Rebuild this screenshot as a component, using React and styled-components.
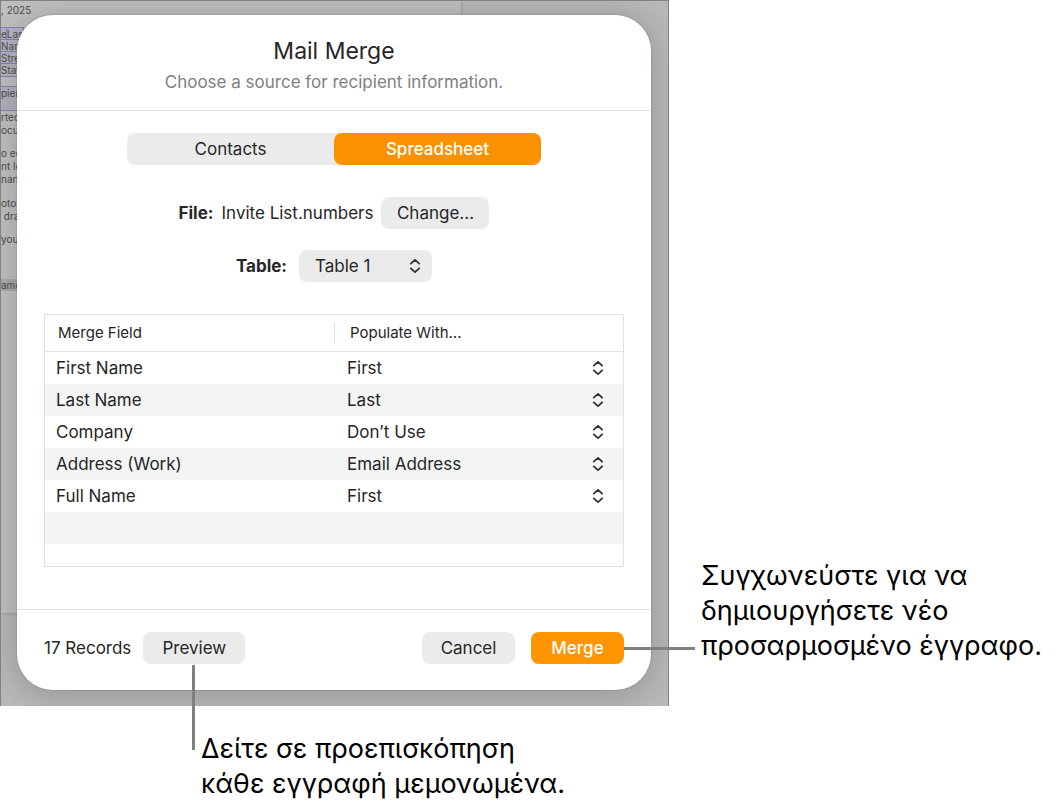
import React, { useState } from "react";
import styled, { createGlobalStyle, css } from "styled-components";

const GlobalStyle = createGlobalStyle`
  *, *::before, *::after { box-sizing: border-box; }
  body {
    margin: 0;
    background: #fff;
    color: #262626;
    font-family: Inter, "Liberation Sans", sans-serif;
    font-size: 17px;
    line-height: 20px;
  }
  button, select, input { font: inherit; color: inherit; }
`;

const Figure = styled.main`
  display: grid;
  grid-template-columns: minmax(560px, 1fr) 387px;
`;

const Stage = styled.div`
  position: relative;
  padding: 15px 18px 16px 17px;
`;

/* Dimmed document window behind the dialog */
const Desk = styled.div`
  position: absolute;
  inset: 0;
  overflow: hidden;
  background: #b8b9bb;
  border: solid #808183;
  border-width: 1px 1px 0 1px;

  &::after {
    content: "";
    position: absolute;
    inset: 14px 17px 16px 16px;
    border-radius: 36px;
    box-shadow: 0 0 2px rgba(0, 0, 0, 0.3), 0 4px 30px 8px rgba(0, 0, 0, 0.14);
  }
`;

const Paper = styled.div`
  width: 69%;
  height: 612px;
  padding-top: 3px;
  background: #c0c0c0;
  box-shadow: 0 0 3px rgba(0, 0, 0, 0.3);
  color: #4c4c4c;
  font-size: 10px;
  line-height: 13px;
  white-space: pre;
`;

const Block = styled.div`
  margin-top: ${(p) => p.$gap}px;
`;

const MergeLine = styled.div`
  height: 12px;
  line-height: 12px;
`;

const Token = styled.span`
  display: inline-block;
  height: 12px;
  min-width: ${(p) => p.$min || 0}px;
  background: #b6b6c2;
  box-shadow: 0 0 0 1px #8481c4;
`;

const Placeholder = styled.div`
  height: 23px;
  line-height: 12px;
  background: #b2b2be;
  box-shadow: 0 0 0 1px #8481c4;
`;

const Band = styled.div`
  margin-top: 33px;
  height: 12px;
  line-height: 12px;
  background: #acacac;
`;

const Dialog = styled.section`
  position: relative;
  background: #fff;
  border-radius: 36px;
`;

const DialogHeader = styled.header`
  padding: 22px 20px 18px;
  border-bottom: 1px solid #e2e2e2;
  text-align: center;
`;

const Title = styled.h1`
  margin: 0;
  font-size: 23px;
  line-height: 28px;
  font-weight: 400;
`;

const Subtitle = styled.p`
  margin: 7px 0 0;
  color: #808080;
`;

const Body = styled.div`
  display: flex;
  flex-direction: column;
  align-items: center;
  padding: 22px 27px 42px;
`;

const Segments = styled.fieldset`
  display: flex;
  width: 414px;
  margin: 0 0 32px;
  padding: 0;
  border: 0;
  border-radius: 8px;
  background: #ebebeb;
`;

const Segment = styled.label`
  flex: 1;
  border-radius: 8px;
  line-height: 32px;
  text-align: center;
  ${(p) =>
    p.$active &&
    css`
      background: #fa9200;
      color: #fff;
      font-weight: 500;
    `}
`;

const HiddenRadio = styled.input`
  position: absolute;
  opacity: 0;
  pointer-events: none;
`;

const Field = styled.div`
  display: flex;
  align-items: center;
  gap: ${(p) => p.$gap}px;
  margin-bottom: ${(p) => p.$below}px;
`;

const Strong = styled.span`
  font-weight: 700;
`;

const Button = styled.button`
  position: relative;
  height: 32px;
  width: ${(p) => p.$width}px;
  padding: 0;
  border: 0;
  border-radius: 8px;
  background: ${(p) => (p.$primary ? "#ff9500" : "#ebebeb")};
  color: ${(p) => (p.$primary ? "#fff" : "#262626")};
  font-weight: ${(p) => (p.$primary ? 500 : 400)};
`;

const SelectBox = styled.span`
  position: relative;
  display: block;
  width: ${(p) => p.$width};
`;

const Select = styled.select`
  display: block;
  appearance: none;
  width: 100%;
  height: 32px;
  padding: 0 32px 0 ${(p) => (p.$filled ? 16 : 13)}px;
  border: 0;
  border-radius: ${(p) => (p.$filled ? 8 : 0)}px;
  background: ${(p) => (p.$filled ? "#ebebeb" : "transparent")};
`;

const Chevrons = styled.svg`
  position: absolute;
  top: 8px;
  right: ${(p) => p.$right}px;
  width: 12px;
  height: 16px;
  pointer-events: none;
  fill: none;
  stroke: #333;
  stroke-width: 1.9;
  stroke-linecap: round;
  stroke-linejoin: round;
`;

const TableFrame = styled.div`
  width: 100%;
  height: 253px;
  overflow: hidden;
  border: 1px solid #e0e0e0;
`;

const Table = styled.table`
  width: 100%;
  border-collapse: separate;
  border-spacing: 0;
  table-layout: fixed;
`;

const HeadCell = styled.th`
  height: 37px;
  padding: 0;
  border-bottom: 1px solid #e0e0e0;
  font-size: 15px;
  font-weight: 400;
  text-align: left;
`;

const HeadLabel = styled.span`
  display: block;
  padding-left: ${(p) => (p.$divided ? 15 : 13)}px;
  line-height: 22px;
  border-left: ${(p) => (p.$divided ? "1px solid #e0e0e0" : "0")};
`;

const Row = styled.tr`
  height: 32px;
  &:nth-child(even) { background: #f3f5f5; }
`;

const Cell = styled.td`
  padding: 0 0 0 ${(p) => p.$left || 0}px;
`;

const Footer = styled.footer`
  display: flex;
  align-items: center;
  gap: 12px;
  padding: 22px 27px 26px;
  border-top: 1px solid #e2e2e2;
`;

const Actions = styled.div`
  display: flex;
  gap: 16px;
  margin-left: auto;
`;

/* Leader lines run from a button to its caption */
const leader = css`
  position: absolute;
  background: #808080;
`;

const LeaderDown = styled.span`
  ${leader}
  top: calc(100% + 1px);
  left: 49px;
  width: 3px;
  height: 85px;
`;

const LeaderRight = styled.span`
  ${leader}
  left: 100%;
  top: 15px;
  width: 71px;
  height: 3px;
`;

const Caption = styled.p`
  margin: 0;
  color: #000;
  font-size: 27px;
  line-height: 35px;
  white-space: nowrap;
`;

const SideCaption = styled(Caption)`
  align-self: end;
  padding: 0 0 43px 32px;
`;

const BottomCaption = styled(Caption)`
  grid-column: 1 / -1;
  padding: 25px 0 10px 201px;
`;

const fields = [
  ["First Name", "First"],
  ["Last Name", "Last"],
  ["Company", "Don’t Use"],
  ["Address (Work)", "Email Address"],
  ["Full Name", "First"],
];
const choices = ["First", "Last", "Email Address", "Don’t Use"];

function UpDown({ right }) {
  return (
    <Chevrons $right={right} viewBox="0 0 12 16" aria-hidden="true">
      <path d="M1.8 5.6 6 1.9l4.2 3.7M1.8 10.4 6 14.1l4.2-3.7" />
    </Chevrons>
  );
}

function Background() {
  return (
    <Desk aria-hidden="true">
      <Paper>
        <Block $gap={0}>, 2025</Block>
        <Block $gap={11}>
          <MergeLine><Token>e</Token><Token>Las</Token></MergeLine>
          <MergeLine><Token $min={17}>Nan</Token></MergeLine>
          <MergeLine><Token $min={17}>Stre</Token></MergeLine>
          <MergeLine><Token $min={17}>Stat</Token></MergeLine>
        </Block>
        <Block $gap={11}><Placeholder>pien</Placeholder></Block>
        <Block $gap={1}>rted{"\n"}ocu</Block>
        <Block $gap={10}>o ed{"\n"}nt lo{"\n"}nan</Block>
        <Block $gap={11}>otos{"\n"} dra</Block>
        <Block $gap={10}>you</Block>
        <Band>ame</Band>
      </Paper>
    </Desk>
  );
}

export default function App() {
  const [source, setSource] = useState("Spreadsheet");
  return (
    <>
      <GlobalStyle />
      <Figure>
        <Stage>
          <Background />
          <Dialog role="dialog" aria-labelledby="dialog-title">
            <DialogHeader>
              <Title id="dialog-title">Mail Merge</Title>
              <Subtitle>Choose a source for recipient information.</Subtitle>
            </DialogHeader>
            <Body>
              <Segments aria-label="Source">
                {["Contacts", "Spreadsheet"].map((name) => (
                  <Segment key={name} $active={source === name}>
                    <HiddenRadio
                      type="radio"
                      name="source"
                      checked={source === name}
                      onChange={() => setSource(name)}
                    />
                    {name}
                  </Segment>
                ))}
              </Segments>
              <Field $gap={8} $below={21}>
                <Strong>File:</Strong>
                <span>Invite List.numbers</span>
                <Button type="button" $width={108}>Change...</Button>
              </Field>
              <Field $gap={12} $below={32}>
                <Strong as="label" htmlFor="table-select">Table:</Strong>
                <SelectBox $width="133px">
                  <Select id="table-select" $filled defaultValue="Table 1">
                    <option>Table 1</option>
                  </Select>
                  <UpDown right={11} />
                </SelectBox>
              </Field>
              <TableFrame>
                <Table>
                  <thead>
                    <tr>
                      <HeadCell><HeadLabel>Merge Field</HeadLabel></HeadCell>
                      <HeadCell><HeadLabel $divided>Populate With...</HeadLabel></HeadCell>
                    </tr>
                  </thead>
                  <tbody>
                    {fields.map(([name, value]) => (
                      <Row key={name}>
                        <Cell $left={11}>{name}</Cell>
                        <Cell>
                          <SelectBox $width="100%">
                            <Select aria-label={name} defaultValue={value}>
                              {choices.map((c) => <option key={c}>{c}</option>)}
                            </Select>
                            <UpDown right={19} />
                          </SelectBox>
                        </Cell>
                      </Row>
                    ))}
                    <Row><Cell /><Cell /></Row>
                    <Row><Cell /><Cell /></Row>
                  </tbody>
                </Table>
              </TableFrame>
            </Body>
            <Footer>
              <span>17 Records</span>
              <Button type="button" $width={102}>
                Preview
                <LeaderDown />
              </Button>
              <Actions>
                <Button type="button" $width={93}>Cancel</Button>
                <Button type="button" $primary $width={93}>
                  Merge
                  <LeaderRight />
                </Button>
              </Actions>
            </Footer>
          </Dialog>
        </Stage>
        <SideCaption>
          Συγχωνεύστε για να<br />δημιουργήσετε νέο<br />προσαρμοσμένο έγγραφο.
        </SideCaption>
        <BottomCaption>
          Δείτε σε προεπισκόπηση<br />κάθε εγγραφή μεμονωμένα.
        </BottomCaption>
      </Figure>
    </>
  );
}
